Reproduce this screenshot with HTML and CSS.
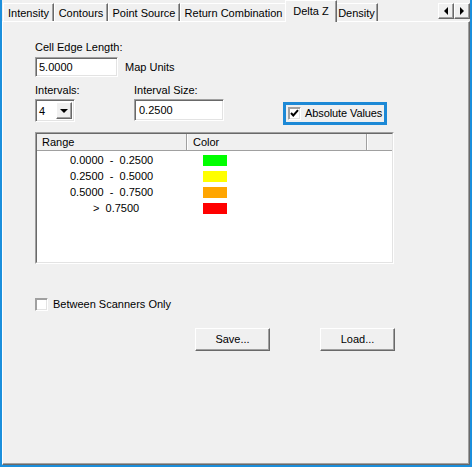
FILE: index.html
```html
<!DOCTYPE html>
<html>
<head>
<meta charset="utf-8">
<link rel="stylesheet" href="styles.css">
</head>
<body>
<div class="window">
  <div class="tabbar">
    <div class="tab w-int">Intensity</div>
    <div class="tab w-con">Contours</div>
    <div class="tab w-pts">Point Source</div>
    <div class="tab w-ret">Return Combination</div>
    <div class="tab sel w-dz">Delta Z</div>
    <div class="tab w-den">Density</div>
    <div class="arrows">
      <div class="abtn"><span class="tri-l"></span></div>
      <div class="abtn"><span class="tri-r"></span></div>
    </div>
  </div>
  <div class="panel">
    <div class="content">
      <div class="lbl">Cell Edge Length:</div>
      <div class="row1">
        <div class="field f-cell">5.0000</div>
        <div class="units">Map Units</div>
      </div>
      <div class="row2">
        <div class="col1">
          <div class="lbl">Intervals:</div>
          <div class="select">
            <div class="sval">4</div>
            <div class="sbtn"><span class="tri-d"></span></div>
          </div>
        </div>
        <div class="col2">
          <div class="lbl">Interval Size:</div>
          <div class="field f-size">0.2500</div>
        </div>
        <div class="focus">
          <div class="chk"><svg width="9" height="9" viewBox="0 0 9 9"><path d="M1 4 L3.3 6.5 L8 1.2" fill="none" stroke="#000" stroke-width="2"/></svg></div>
          <div class="chklbl fl">Absolute Values</div>
        </div>
      </div>
      <div class="list">
        <div class="list-in">
          <div class="hdr">
            <div class="hc hc-range">Range</div>
            <div class="hc hc-color">Color</div>
            <div class="hc hc-rest"></div>
          </div>
          <div class="rows">
            <div class="lrow"><div class="rc">0.0000  -  0.2500</div><div class="cc"><span class="sw" style="background:#00ff00"></span></div></div>
            <div class="lrow"><div class="rc">0.2500  -  0.5000</div><div class="cc"><span class="sw" style="background:#ffff00"></span></div></div>
            <div class="lrow"><div class="rc">0.5000  -  0.7500</div><div class="cc"><span class="sw" style="background:#ffa500"></span></div></div>
            <div class="lrow"><div class="rc gt">&gt;  0.7500</div><div class="cc"><span class="sw" style="background:#ff0000"></span></div></div>
          </div>
        </div>
      </div>
      <div class="between">
        <div class="chk"></div>
        <div class="chklbl">Between Scanners Only</div>
      </div>
      <div class="buttons">
        <div class="btn">Save...</div>
        <div class="btn">Load...</div>
      </div>
    </div>
  </div>
</div>
</body>
</html>
```
FILE: styles.css
```css
html, body {
  margin: 0;
  padding: 0;
}
body {
  width: 472px;
  height: 467px;
  overflow: hidden;
  background: #f0f0f0;
  font-family: "Liberation Sans", Arial, sans-serif;
  font-size: 11px;
  color: #000;
}
.window {
  box-sizing: border-box;
  width: 472px;
  height: 467px;
  border-left: 2px solid #1b8fdc;
  border-right: 2px solid #1b8fdc;
  border-bottom: 2px solid #1b8fdc;
  display: flex;
  flex-direction: column;
}
.tabbar {
  height: 21px;
  display: flex;
  align-items: flex-end;
  padding-left: 1px;
  position: relative;
  z-index: 2;
}
.tab {
  box-sizing: border-box;
  height: 18px;
  line-height: 18px;
  text-align: center;
  border-top: 1px solid #fff;
  border-left: 1px solid #fff;
  border-right: 1px solid #696969;
  box-shadow: inset -1px 0 #a0a0a0;
  white-space: nowrap;
}
.w-int { width: 51px; }
.w-con { width: 54px; }
.w-pts { width: 72px; }
.w-ret { width: 107px; }
.w-den { width: 43px; }
.tab.sel {
  width: 52px;
  height: 22px;
  line-height: 20px;
  margin: 0 -2px -1px -2px;
  background: #f0f0f0;
  position: relative;
  z-index: 3;
}
.arrows {
  margin-left: auto;
  align-self: flex-start;
  margin-top: 3px;
  display: flex;
}
.abtn {
  box-sizing: border-box;
  width: 16px;
  height: 16px;
  border-top: 1px solid #fff;
  border-left: 1px solid #fff;
  border-right: 1px solid #696969;
  border-bottom: 1px solid #696969;
  box-shadow: inset -1px -1px #a0a0a0;
  display: flex;
  align-items: center;
  justify-content: center;
}
.tri-l {
  width: 0; height: 0;
  border-top: 4px solid transparent;
  border-bottom: 4px solid transparent;
  border-right: 4px solid #000;
}
.tri-r {
  width: 0; height: 0;
  border-top: 4px solid transparent;
  border-bottom: 4px solid transparent;
  border-left: 4px solid #000;
}
.tri-d {
  width: 0; height: 0;
  border-left: 4px solid transparent;
  border-right: 4px solid transparent;
  border-top: 4px solid #000;
}
.panel {
  box-sizing: border-box;
  flex: 1;
  border-top: 1px solid #fff;
  border-left: 1px solid #fff;
  border-right: 1px solid #696969;
  border-bottom: 1px solid #696969;
  box-shadow: inset -1px -1px #a0a0a0;
}
.content {
  padding: 19px 0 0 32px;
}
.lbl {
  line-height: 13px;
  white-space: nowrap;
}
.row1 {
  display: flex;
  align-items: center;
  margin-top: 3px;
}
.field {
  box-sizing: border-box;
  background: #fff;
  border-top: 1px solid #a0a0a0;
  border-left: 1px solid #a0a0a0;
  border-right: 1px solid #fff;
  border-bottom: 1px solid #fff;
  box-shadow: inset 1px 1px #696969, inset -1px -1px #e3e3e3;
  padding-left: 3px;
  display: flex;
  align-items: center;
}
.f-cell { width: 83px; height: 20px; }
.f-size { width: 90px; height: 22px; margin-top: 2px; padding-left: 4px; }
.units { margin-left: 7px; }
.row2 {
  display: flex;
  align-items: flex-start;
  margin-top: 7px;
}
.col1 { width: 99px; }
.col2 { width: 90px; }
.select {
  box-sizing: border-box;
  width: 40px;
  height: 23px;
  margin-top: 2px;
  background: #fff;
  border-top: 1px solid #a0a0a0;
  border-left: 1px solid #a0a0a0;
  border-right: 1px solid #fff;
  border-bottom: 1px solid #fff;
  box-shadow: inset 1px 1px #696969, inset -1px -1px #e3e3e3;
  padding: 2px 2px 2px 2px;
  display: flex;
  align-items: center;
}
.sval { flex: 1; padding-left: 1px; }
.sbtn {
  box-sizing: border-box;
  width: 16px;
  height: 17px;
  background: #f0f0f0;
  border-top: 1px solid #fff;
  border-left: 1px solid #fff;
  border-right: 1px solid #696969;
  border-bottom: 1px solid #696969;
  box-shadow: inset -1px -1px #a0a0a0;
  display: flex;
  align-items: center;
  justify-content: center;
}
.focus {
  box-sizing: border-box;
  width: 104px;
  height: 23px;
  margin-left: 59px;
  margin-top: 18px;
  border: 3px solid #1d89d6;
  display: flex;
  align-items: center;
  padding-left: 2px;
}
.chk {
  box-sizing: border-box;
  width: 13px;
  height: 13px;
  background: #fff;
  border-top: 1px solid #a0a0a0;
  border-left: 1px solid #a0a0a0;
  border-right: 1px solid #fff;
  border-bottom: 1px solid #fff;
  box-shadow: inset 1px 1px #a0a0a0, inset -1px -1px #e3e3e3;
  display: flex;
  align-items: center;
  justify-content: center;
  flex: none;
}
.chklbl {
  margin-left: 5px;
  white-space: nowrap;
  line-height: 13px;
}
.chklbl.fl { margin-left: 4px; letter-spacing: -0.1px; }
.list {
  box-sizing: border-box;
  width: 359px;
  height: 132px;
  margin-top: 7px;
  border-top: 1px solid #a0a0a0;
  border-left: 1px solid #a0a0a0;
  border-right: 1px solid #fff;
  border-bottom: 1px solid #fff;
}
.list-in {
  box-sizing: border-box;
  height: 100%;
  background: #fff;
  border-top: 1px solid #696969;
  border-left: 1px solid #696969;
  border-right: 1px solid #e3e3e3;
  border-bottom: 1px solid #e3e3e3;
}
.hdr {
  box-sizing: border-box;
  height: 17px;
  display: flex;
  background: #f0f0f0;
  border-bottom: 1px solid #a0a0a0;
}
.hc {
  box-sizing: border-box;
  height: 16px;
  line-height: 16px;
  padding-left: 5px;
}
.hc-range { width: 150px; border-right: 1px solid #a0a0a0; }
.hc-color { width: 180px; border-left: 1px solid #fff; border-right: 1px solid #a0a0a0; }
.hc-rest { flex: 1; border-left: 1px solid #fff; }
.rows { padding-top: 1px; }
.lrow {
  display: flex;
  height: 16px;
  line-height: 16px;
}
.rc {
  width: 150px;
  box-sizing: border-box;
  padding-left: 33px;
  white-space: pre;
}
.rc.gt { padding-left: 56px; }
.cc {
  padding-left: 16px;
  padding-top: 3px;
}
.sw {
  display: block;
  width: 24px;
  height: 11px;
}
.between {
  display: flex;
  align-items: center;
  margin-top: 34px;
}
.buttons {
  display: flex;
  margin-top: 17px;
  margin-left: 160px;
  gap: 50px;
}
.btn {
  box-sizing: border-box;
  width: 75px;
  height: 23px;
  line-height: 20px;
  text-align: center;
  border-top: 1px solid #fff;
  border-left: 1px solid #fff;
  border-right: 1px solid #696969;
  border-bottom: 1px solid #696969;
  box-shadow: inset -1px -1px #a0a0a0;
}
```
